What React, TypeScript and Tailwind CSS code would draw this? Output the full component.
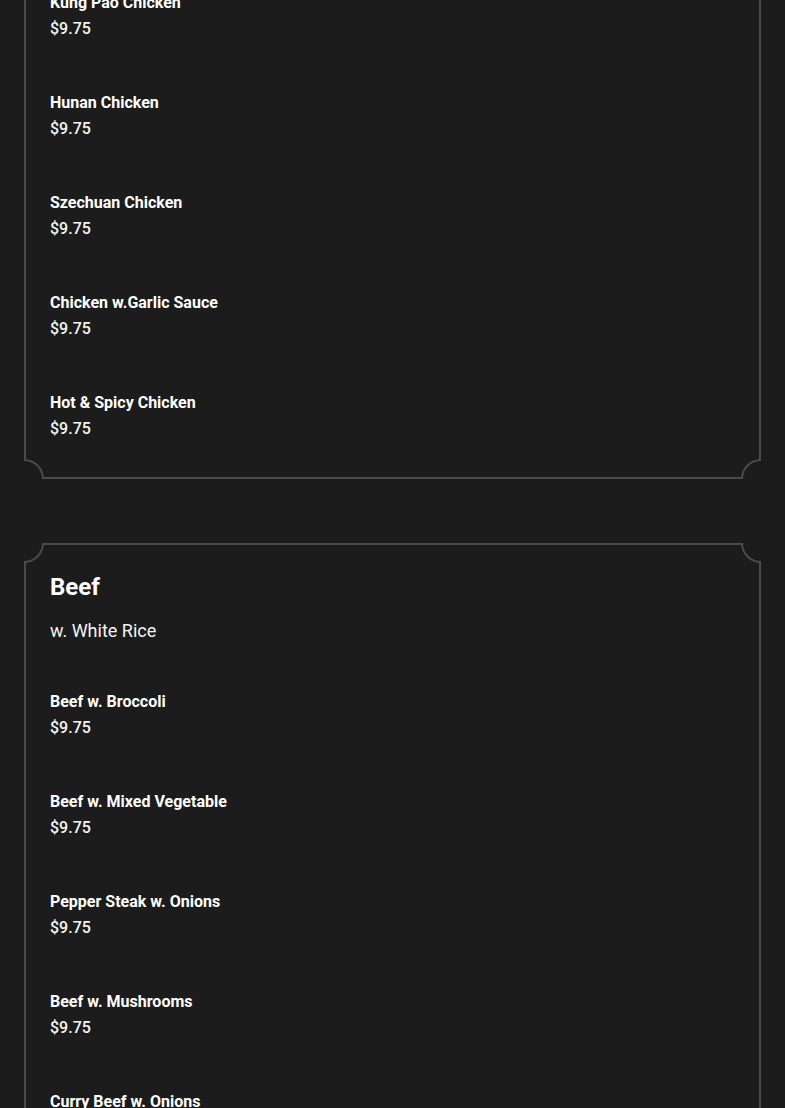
import React from "react";

type Item = { name: string; price: string };

const chicken: Item[] = [
  { name: "Kung Pao Chicken", price: "$9.75" },
  { name: "Hunan Chicken", price: "$9.75" },
  { name: "Szechuan Chicken", price: "$9.75" },
  { name: "Chicken w.Garlic Sauce", price: "$9.75" },
  { name: "Hot & Spicy Chicken", price: "$9.75" },
];

const beef: Item[] = [
  { name: "Beef w. Broccoli", price: "$9.75" },
  { name: "Beef w. Mixed Vegetable", price: "$9.75" },
  { name: "Pepper Steak w. Onions", price: "$9.75" },
  { name: "Beef w. Mushrooms", price: "$9.75" },
  { name: "Curry Beef w. Onions", price: "$9.75" },
  { name: "Beef w. Garlic Sauce", price: "$9.75" },
];

const Corners = () => (
  <>
    <div className="absolute -top-[2px] -left-[2px] w-[20px] h-[20px] bg-[#1c1c1c] border-r-2 border-b-2 border-[#4b4b4b] rounded-br-[20px]" />
    <div className="absolute -top-[2px] -right-[2px] w-[20px] h-[20px] bg-[#1c1c1c] border-l-2 border-b-2 border-[#4b4b4b] rounded-bl-[20px]" />
    <div className="absolute -bottom-[2px] -left-[2px] w-[20px] h-[20px] bg-[#1c1c1c] border-r-2 border-t-2 border-[#4b4b4b] rounded-tr-[20px]" />
    <div className="absolute -bottom-[2px] -right-[2px] w-[20px] h-[20px] bg-[#1c1c1c] border-l-2 border-t-2 border-[#4b4b4b] rounded-tl-[20px]" />
  </>
);

const MenuItem = ({ item }: { item: Item }) => (
  <div className="flex flex-col">
    <span className="text-[16px] leading-[26px] font-bold text-white">{item.name}</span>
    <span className="text-[16px] leading-[26px] font-medium text-[#f4f4f4]">{item.price}</span>
  </div>
);

const App = () => {
  return (
    <div className="min-h-screen bg-[#1c1c1c] font-['Roboto',sans-serif] overflow-hidden">
      <div className="-mt-[40px] px-[24px] flex flex-col gap-[64px]">
        <div className="relative border-2 border-[#4b4b4b] pt-[28px] pb-[35px] px-[24px]">
          <Corners />
          <div className="flex flex-col gap-[48px]">
            {chicken.map((item) => (
              <MenuItem key={item.name} item={item} />
            ))}
          </div>
        </div>

        <div className="relative border-2 border-[#4b4b4b] pt-[26px] pb-[36px] px-[24px]">
          <Corners />
          <h2 className="text-[24px] leading-[32px] font-bold text-white">Beef</h2>
          <p className="mt-[14px] text-[18px] leading-[28px] text-[#f4f4f4]">w. White Rice</p>
          <div className="mt-[44px] flex flex-col gap-[48px]">
            {beef.map((item) => (
              <MenuItem key={item.name} item={item} />
            ))}
          </div>
        </div>
      </div>
    </div>
  );
};

export default App;
